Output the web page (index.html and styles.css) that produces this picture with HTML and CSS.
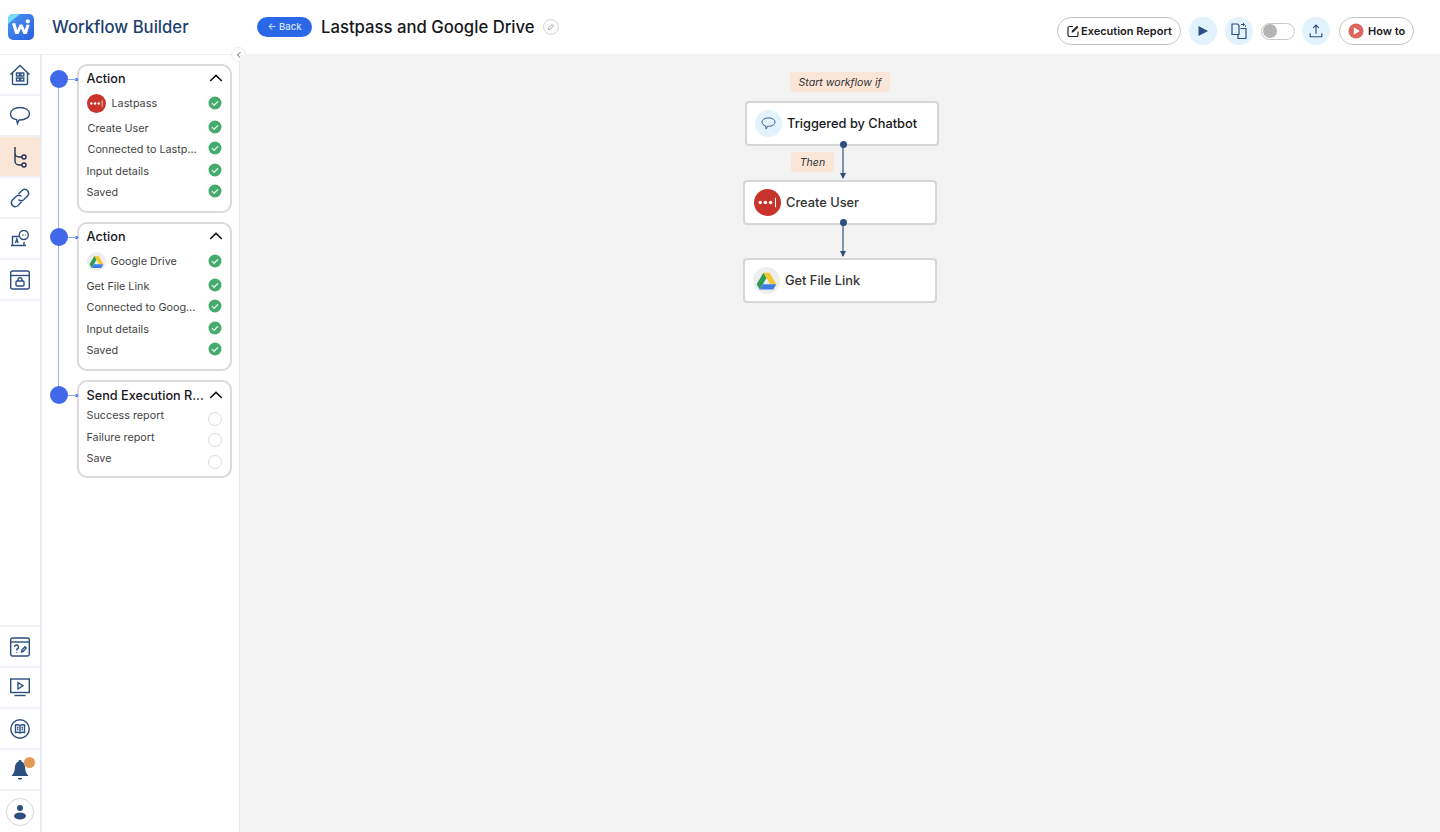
FILE: index.html
```html
<!DOCTYPE html>
<html lang="en">
<head>
<meta charset="utf-8">
<title>Workflow Builder</title>
<link rel="stylesheet" href="styles.css">
</head>
<body>
<svg class="defs" width="0" height="0" aria-hidden="true">
  <defs>
    <linearGradient id="logo-bg" x1="0" y1="0" x2="1" y2="1">
      <stop offset="0" stop-color="#4a9af2"/>
      <stop offset="1" stop-color="#2a5ce0"/>
    </linearGradient>
    <symbol id="lastpass" viewBox="0 0 26 26">
      <circle cx="13" cy="13" r="13" fill="#c8342b"/>
      <circle cx="6" cy="13" r="1.7" fill="#fff"/><circle cx="11" cy="13" r="1.7" fill="#fff"/><circle cx="16" cy="13" r="1.7" fill="#fff"/>
      <rect x="20.2" y="8.5" width="1" height="9" fill="#fff"/>
    </symbol>
    <symbol id="gdrive" viewBox="0 0 28 28">
      <circle cx="14" cy="14" r="14" fill="#eeeeee"/>
      <path d="M10.8 6h6.4l7 12h-6.4z" fill="#f6c731"/>
      <path d="M10.8 6l-7 12 3.2 5.4 7-12z" fill="#2f9a57"/>
      <path d="M7 23.4h14l3.2-5.4h-14z" fill="#3f7be6"/>
    </symbol>
    <symbol id="check" viewBox="0 0 14 14">
      <circle cx="7" cy="7" r="6.5" fill="#45ab6d"/>
      <path d="M3.9 7.1l2.2 2.2 4-4" fill="none" stroke="#dff3e6" stroke-width="1.3"/>
    </symbol>
    <symbol id="chev" viewBox="0 0 14 8">
      <path d="M1.2 7L7 1.4 12.8 7" fill="none" stroke="#111" stroke-width="1.5"/>
    </symbol>
  </defs>
</svg>
<div class="app">
  <header class="topbar">
    <div class="brand">
      <svg class="logo" viewBox="0 0 26 26">
        <rect width="26" height="26" rx="5" fill="url(#logo-bg)"/>
        <path d="M0 10V5a5 5 0 0 1 5-5h7z" fill="#74dcf5"/>
        <path d="M4 9.500l3.300 10.500h3.200L13 14.500l2.500 5.500h3.200L21.600 11l-3-.6-1.800 5.500-2.500-5.500h-2.600l-2.500 5.500L7.200 9z" fill="#fff"/>
        <circle cx="19.800" cy="7.300" r="2.100" fill="#fff"/>
      </svg>
      <span class="brand-name">Workflow Builder</span>
    </div>
    <button class="back">← Back</button>
    <h1 class="title">Lastpass and Google Drive</h1>
    <span class="edit">
      <svg viewBox="0 0 16 16" width="16" height="16"><circle cx="8" cy="8" r="7.4" fill="#fff" stroke="#d4d4d4"/><path d="M5.2 10.8l.5-2 3.400-3.400 1.500 1.500-3.400 3.400z" fill="none" stroke="#a8a8a8"/></svg>
    </span>
    <div class="actions">
      <button class="pill pill-report">
        <svg viewBox="0 0 14 14" width="14" height="14"><path d="M7 2.500H3.500A1.500 1.500 0 0 0 2 4v7a1.500 1.500 0 0 0 1.500 1.500h7A1.500 1.500 0 0 0 12 11V7.500" fill="none" stroke="#222" stroke-width="1.200"/><path d="M5.500 8.800l.5-2L11 1.800l1.400 1.400-5 5z" fill="#222"/></svg>
        Execution Report
      </button>
      <span class="round round-play"><svg viewBox="0 0 12 12" width="12" height="12"><path d="M1.500 1l9.500 5-9.500 5z" fill="#2c5083"/></svg></span>
      <span class="round round-copy"><svg viewBox="0 0 18 18" width="18" height="18"><path d="M2 2h5.500l1.500 1.500v9H2z M10.500 6.500H16v10H8v-4" fill="none" stroke="#2c5083" stroke-width="1.200"/><path d="M11 2.500h3.500M13 1l1.500 1.500L13 4M15.500 3.500v1.500" fill="none" stroke="#2c5083" stroke-width="1"/></svg></span>
      <span class="toggle"><span class="knob"></span></span>
      <span class="round round-upload"><svg viewBox="0 0 18 18" width="16" height="16"><path d="M9 12V2.500M5.800 5.500L9 2.300l3.200 3.200M2.500 11.500v4h13v-4" fill="none" stroke="#2c5083" stroke-width="1.300"/></svg></span>
      <button class="pill pill-how">
        <svg viewBox="0 0 16 16" width="16" height="16"><circle cx="8" cy="8" r="7.500" fill="#dc6560"/><path d="M5.800 4.300l6 3.700-6 3.700z" fill="#fff"/></svg>
        How to
      </button>
    </div>
  </header>
  <div class="main">
    <nav class="rail">
      <div class="rail-top">
        <a class="rail-item"><svg viewBox="0 0 22 22" width="22" height="22" class="ico"><path d="M1.500 10.500L11 1.500l9.500 9M3.500 9v10.500a1 1 0 0 0 1 1h13a1 1 0 0 0 1-1V9"/><rect x="7.500" y="9" width="3" height="3"/><rect x="11.800" y="9" width="3" height="3"/><rect x="7.500" y="14" width="3" height="3"/><rect x="11.800" y="14" width="3" height="3"/></svg></a>
        <a class="rail-item"><svg viewBox="0 0 22 20" width="22" height="20" class="ico"><path d="M11 1.500c5.300 0 9.500 2.700 9.500 6.200S16.300 14 11 14l-1 0-1.500 3.500-1-3.900C4 13 1.500 10.800 1.500 7.700 1.500 4.200 5.700 1.500 11 1.500z"/></svg></a>
        <a class="rail-item rail-active"><svg viewBox="0 0 18 24" width="18" height="24" class="ico ico-flow"><path d="M4 2v14a4 4 0 0 0 4 4h3M4 8a4 4 0 0 0 4 4h3"/><circle cx="13" cy="12" r="2"/><circle cx="13" cy="20" r="2"/></svg></a>
        <a class="rail-item"><svg viewBox="0 0 22 22" width="22" height="22" class="ico"><path d="M9.500 7l4-4A4 4 0 0 1 19 8.500l-4 4a4 4 0 0 1-5.500 0"/><path d="M12.500 15l-4 4A4 4 0 0 1 3 13.500l4-4a4 4 0 0 1 5.500 0"/></svg></a>
        <a class="rail-item"><svg viewBox="0 0 20 18" width="20" height="18" class="ico"><path d="M1 15.500h15M2.500 15V6.500H9M14 12v3"/><path d="M5.500 13l1.300-4 1.300 4"/><circle cx="13.800" cy="5" r="4.500"/><path d="M12 5h.6M13.500 5h.6M15 5h.6"/></svg></a>
        <a class="rail-item"><svg viewBox="0 0 20 20" width="20" height="20" class="ico"><rect x="0.700" y="1" width="18.600" height="18" rx="1.800"/><path d="M1 5.500h18"/><rect x="6" y="11" width="8" height="5" rx="1"/><path d="M8 11V9.800a2 2 0 0 1 4 0V11"/></svg></a>
      </div>
      <div class="rail-bottom">
        <a class="rail-item"><svg viewBox="0 0 20 20" width="20" height="20" class="ico"><rect x="0.700" y="1" width="18.600" height="18" rx="1.800"/><path d="M1 5h18"/><path d="M4.500 10a2 2 0 1 1 2.500 2l-.3 1.500M6.600 15.200v.8M11.500 15l.4-2 3-3.200 1.300 1.300-3 3.300z"/></svg></a>
        <a class="rail-item"><svg viewBox="0 0 20 20" width="20" height="20" class="ico"><rect x="0.700" y="1" width="18.600" height="13.500"/><path d="M8 4.500l5 3.300-5 3.200z"/><path d="M4.500 17.500h11"/></svg></a>
        <a class="rail-item"><svg viewBox="0 0 20 20" width="20" height="20" class="ico"><circle cx="10" cy="10" r="9.200"/><path d="M10 6.500C8.500 5.700 6.800 5.700 5.500 6v7.500c1.500-.3 3-.3 4.500.5 1.500-.8 3-.8 4.500-.5V6c-1.300-.3-3-.3-4.500.5zM10 6.500V14M7 8.500h1.500M7 10.500h1.500M11.500 8.500H13M11.500 10.500H13"/></svg></a>
        <a class="rail-item bell"><svg viewBox="0 0 18 22" width="18" height="22"><path d="M9 1a1.500 1.500 0 0 1 1.500 1.800c2.600.8 3.500 3 3.600 5.700.1 3.800 1.400 6.500 3.400 8.500H.5c2-2 3.300-4.700 3.400-8.500C4 5.800 4.900 3.600 7.500 2.800A1.500 1.500 0 0 1 9 1z" fill="#2c4f80"/><path d="M6.800 19h4.400a2.200 1.800 0 0 1-4.400 0z" fill="#2c4f80"/></svg><span class="badge"></span></a>
        <a class="rail-item rail-user"><span class="avatar"><svg viewBox="0 0 14 16" width="14" height="16"><circle cx="7" cy="4" r="3" fill="#2c4f80"/><ellipse cx="7" cy="12" rx="6" ry="3.500" fill="#2c4f80"/></svg></span></a>
      </div>
    </nav>
    <aside class="sidebar">
      <span class="timeline"></span>
      <section class="card card-a">
        <span class="node"></span>
        <div class="card-head"><span class="head-text">Action</span><svg class="chev"><use href="#chev"/></svg></div>
        <div class="row row-app"><span class="label app-label"><svg class="app-ico"><use href="#lastpass"/></svg>Lastpass</span><svg class="ok"><use href="#check"/></svg></div>
        <div class="row"><span class="label label-in">Create User</span><svg class="ok"><use href="#check"/></svg></div>
        <div class="row"><span class="label label-in">Connected to Lastp...</span><svg class="ok"><use href="#check"/></svg></div>
        <div class="row"><span class="label">Input details</span><svg class="ok"><use href="#check"/></svg></div>
        <div class="row"><span class="label">Saved</span><svg class="ok"><use href="#check"/></svg></div>
      </section>
      <section class="card card-a">
        <span class="node"></span>
        <div class="card-head"><span class="head-text">Action</span><svg class="chev"><use href="#chev"/></svg></div>
        <div class="row row-app"><span class="label app-label app-label-tight"><svg class="app-ico"><use href="#gdrive"/></svg>Google Drive</span><svg class="ok"><use href="#check"/></svg></div>
        <div class="row"><span class="label">Get File Link</span><svg class="ok"><use href="#check"/></svg></div>
        <div class="row"><span class="label">Connected to Goog...</span><svg class="ok"><use href="#check"/></svg></div>
        <div class="row"><span class="label">Input details</span><svg class="ok"><use href="#check"/></svg></div>
        <div class="row"><span class="label">Saved</span><svg class="ok"><use href="#check"/></svg></div>
      </section>
      <section class="card card-b">
        <span class="node"></span>
        <div class="card-head head-b"><span class="head-text">Send Execution R...</span><svg class="chev"><use href="#chev"/></svg></div>
        <div class="row row-up"><span class="label">Success report</span><span class="todo"></span></div>
        <div class="row row-up"><span class="label">Failure report</span><span class="todo"></span></div>
        <div class="row row-up"><span class="label">Save</span><span class="todo"></span></div>
      </section>
      <button class="collapse"><svg viewBox="0 0 8 10" width="6" height="8"><path d="M6 1L2 5l4 4" fill="none" stroke="#555" stroke-width="1.200"/></svg></button>
    </aside>
    <main class="canvas">
      <span class="tag tag-start">Start workflow if</span>
      <div class="flow-node node-trigger">
        <span class="chat-ico"><svg viewBox="0 0 16 14" width="15" height="13"><path d="M8 1c3.900 0 7 1.900 7 4.500S11.900 10 8 10H7l-1.500 3-.5-3.300C2.500 9.100 1 7.500 1 5.500 1 2.900 4.100 1 8 1z" fill="none" stroke="#2c5083" stroke-width="1"/></svg></span>
        <span class="flow-label strong">Triggered by Chatbot</span>
      </div>
      <span class="tag tag-then">Then</span>
      <div class="link link-1"></div>
      <div class="flow-node node-create">
        <svg class="flow-ico"><use href="#lastpass"/></svg>
        <span class="flow-label">Create User</span>
      </div>
      <div class="link link-2"></div>
      <div class="flow-node node-file">
        <svg class="flow-ico"><use href="#gdrive"/></svg>
        <span class="flow-label label-file">Get File Link</span>
      </div>
    </main>
  </div>
</div>
</body>
</html>
```

FILE: styles.css
```css
* { box-sizing: border-box; }
html, body { margin: 0; padding: 0; height: 100%; overflow: hidden; background: #fff; }
body { font-family: Inter, "Open Sans", sans-serif; color: #1c1c1c; }
.defs { position: absolute; }
button { font-family: inherit; cursor: pointer; }
.app { width: 1440px; height: 832px; display: flex; flex-direction: column; }

.topbar { height: 55px; flex: none; display: flex; align-items: center; border-bottom: 1px solid #ecedf0; background: #fff; }
.brand { width: 257px; flex: none; display: flex; align-items: center; padding-left: 8px; }
.logo { width: 26px; height: 26px; flex: none; }
.brand-name { margin-left: 18px; font-size: 16.700px; font-weight: 500; color: #1d3f6e; }
.back { width: 55px; height: 20px; margin-top: -1px; padding: 0; border: 0; border-radius: 10px; background: #2b68e8; color: #dbe6fb; font-size: 9.500px; font-weight: 500; }
.title { margin: 0 0 0 9px; font-size: 16.700px; font-weight: 500; color: #17171c; }
.edit { margin-left: 8px; display: flex; }
.actions { margin-left: auto; padding: 8px 26px 0 0; display: flex; align-items: center; }
.pill { display: flex; align-items: center; height: 28px; border: 1px solid #c4c4c4; border-radius: 14px; background: #fff; font-size: 11px; font-weight: 600; color: #1c1c1c; padding: 0; }
.pill-report { width: 124px; padding-left: 8px; gap: 1px; }
.pill-how { width: 75px; padding-left: 8px; gap: 4px; margin-left: 9px; }
.round { width: 28px; height: 28px; border-radius: 50%; background: #e2f3fd; display: flex; align-items: center; justify-content: center; flex: none; }
.round-play { margin-left: 8px; }
.round-copy { margin-left: 8px; }
.round-upload { margin-left: 7px; }
.toggle { width: 34px; height: 17px; margin-left: 8px; border: 1px solid #c8c8c8; border-radius: 9px; background: #fff; display: flex; align-items: center; padding-left: 1px; }
.knob { width: 14px; height: 14px; border-radius: 50%; background: #b4b4b4; }

.main { flex: 1; min-height: 0; display: flex; }
.rail { width: 42px; flex: none; border-right: 2px solid #e8ecf4; display: flex; flex-direction: column; justify-content: space-between; background: #fff; }
.rail-item { height: 41px; display: flex; align-items: center; justify-content: center; border-bottom: 2px solid #eef0f5; position: relative; }
.rail-bottom { border-top: 2px solid #eef0f5; }
.rail-bottom .rail-item:last-child { border-bottom: 0; }
.rail-active { background: #fbe5d7; }
.ico { fill: none; stroke: #2c4f80; stroke-width: 1.400; }
.ico-flow { stroke: #22344f; }
.badge { position: absolute; top: 7px; right: 5px; width: 11px; height: 11px; border-radius: 50%; background: #e39a55; }
.avatar { width: 28px; height: 28px; border: 1px solid #d8d8d8; border-radius: 50%; display: flex; align-items: center; justify-content: center; }

.sidebar { width: 198px; flex: none; position: relative; border-right: 1px solid #e4e6ea; padding: 9px 8px 0 35px; display: flex; flex-direction: column; gap: 9px; background: #fff; }
.timeline { position: absolute; left: 16px; top: 24px; width: 1px; height: 316px; background: #9db8f8; }
.card { position: relative; border: 2px solid #dadada; border-radius: 10px; background: #fff; width: 155px; }
.card-a { height: 149px; }
.card-b { height: 98px; }
.node { position: absolute; left: -29px; top: 4px; width: 18px; height: 18px; border-radius: 50%; background: #4069ea; }
.node::after { content: ""; position: absolute; left: 18px; top: 8.500px; width: 9px; height: 1px; background: #8ea9f4; }
.node::before { content: ""; position: absolute; left: 24.500px; top: 7.500px; width: 3px; height: 3px; border-radius: 50%; background: #2f5fe6; }
.card-head { height: 24.500px; display: flex; align-items: center; justify-content: space-between; padding: 0 7px 0 7.500px; }
.head-b { height: 26px; }
.head-text { font-size: 12.700px; font-weight: 500; color: #17171c; white-space: nowrap; }
.chev { width: 14px; height: 8px; flex: none; }
.row { height: 21.500px; display: flex; align-items: center; justify-content: space-between; padding: 0 8px 0 7.500px; }
.row-app { height: 25.500px; }
.label { font-size: 10.800px; color: #444; white-space: nowrap; padding-top: 3px; }
.label-in { margin-left: 1px; }
.app-label { display: flex; align-items: center; gap: 6px; padding-top: 0; }
.app-label-tight { gap: 5px; }
.app-ico { width: 19px; height: 19px; flex: none; }
.ok { width: 14px; height: 14px; flex: none; }
.todo { width: 14px; height: 14px; border: 1px solid #dcdcdc; border-radius: 50%; flex: none; }
.row-up .label { padding: 0 0 6px; }

.collapse { position: absolute; right: -7px; top: -8px; width: 15px; height: 15px; padding: 0; border: 1px solid #f3e8df; border-radius: 50%; background: #fff; display: flex; align-items: center; justify-content: center; }

.canvas { flex: 1; position: relative; background: #f3f3f3; }
.tag { position: absolute; height: 20px; display: flex; align-items: center; justify-content: center; background: #fbe5d7; border-radius: 2px; font-size: 10.600px; font-style: italic; color: #333; }
.tag-start { left: 550px; top: 17px; width: 100px; }
.tag-then { left: 551px; top: 97px; width: 43px; }
.flow-node { position: absolute; width: 194px; height: 45px; display: flex; align-items: center; background: #fff; border: 2px solid #d6d6d6; border-radius: 4px; }
.node-trigger { left: 505px; top: 45.500px; padding-left: 8px; }
.node-create { left: 503px; top: 124.500px; padding-left: 9px; }
.node-file { left: 503px; top: 202.500px; padding-left: 8px; }
.chat-ico { width: 27px; height: 27px; border-radius: 50%; background: #e2f3fd; display: flex; align-items: center; justify-content: center; flex: none; }
.flow-ico { width: 27px; height: 27px; flex: none; }
.flow-label { margin-left: 5px; font-size: 12.800px; font-weight: 500; color: #333; white-space: nowrap; }
.label-file { margin-left: 5px; }
.strong { color: #17171c; }
.link { position: absolute; left: 602px; width: 2px; height: 34px; background: #8093ae; }
.link-1 { top: 89px; }
.link-2 { top: 167px; }
.link::before { content: ""; position: absolute; left: -2.500px; top: -3px; width: 7px; height: 7px; border-radius: 50%; background: #2c4f80; }
.link::after { content: ""; position: absolute; left: -2.500px; bottom: -1px; border-left: 3.500px solid transparent; border-right: 3.500px solid transparent; border-top: 6px solid #2c4f80; }
```
